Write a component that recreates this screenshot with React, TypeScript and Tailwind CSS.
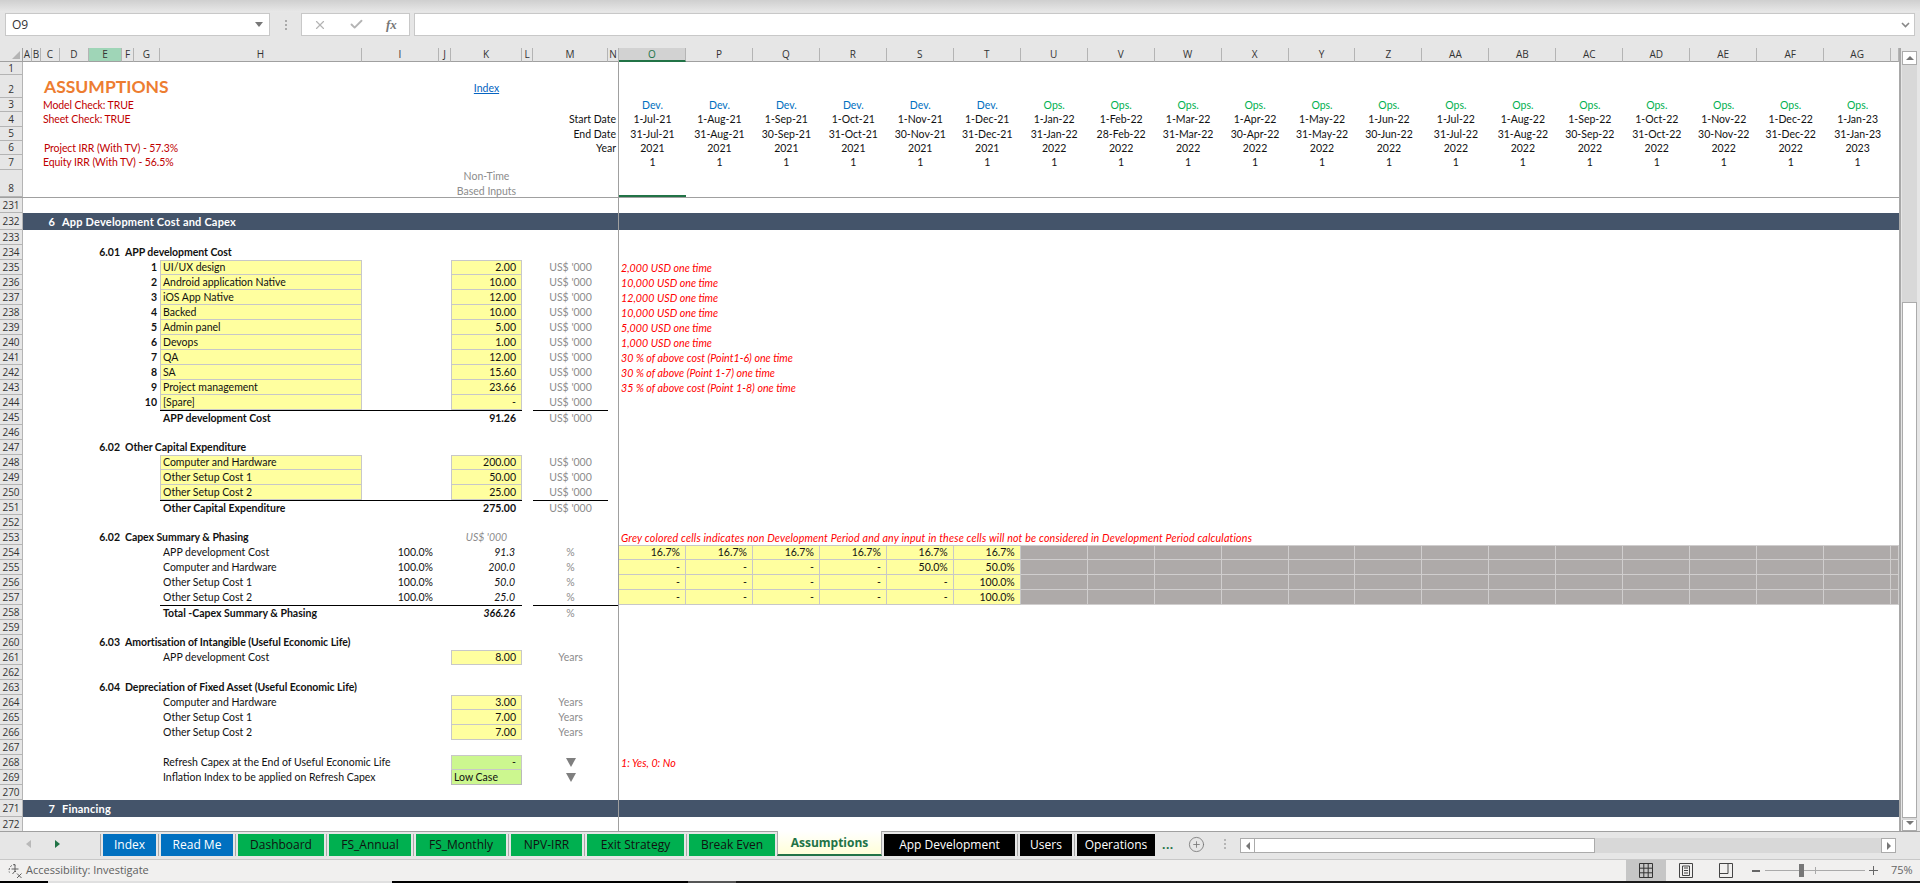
import { Check, CirclePlus, X } from 'lucide-react'
import type { ReactNode } from 'react'

const GRID =
  'grid h-full grid-rows-[minmax(0,1fr)] grid-cols-[9px_9px_19px_29px_33px_12px_26px_202px_77px_12px_71px_11px_75px_11px_repeat(19,66.96px)_minmax(0,1fr)]'

const letters = [
  'A', 'B', 'C', 'D', 'E', 'F', 'G', 'H', 'I', 'J', 'K', 'L', 'M', 'N', 'O', 'P', 'Q', 'R', 'S', 'T',
  'U', 'V', 'W', 'X', 'Y', 'Z', 'AA', 'AB', 'AC', 'AD', 'AE', 'AF', 'AG', '',
]

const phases = ['Dev.', 'Dev.', 'Dev.', 'Dev.', 'Dev.', 'Dev.', ...Array(13).fill('Ops.')] as string[]
const startDates = [
  '1-Jul-21', '1-Aug-21', '1-Sep-21', '1-Oct-21', '1-Nov-21', '1-Dec-21', '1-Jan-22', '1-Feb-22', '1-Mar-22', '1-Apr-22',
  '1-May-22', '1-Jun-22', '1-Jul-22', '1-Aug-22', '1-Sep-22', '1-Oct-22', '1-Nov-22', '1-Dec-22', '1-Jan-23',
]
const endDates = [
  '31-Jul-21', '31-Aug-21', '30-Sep-21', '31-Oct-21', '30-Nov-21', '31-Dec-21', '31-Jan-22', '28-Feb-22', '31-Mar-22', '30-Apr-22',
  '31-May-22', '30-Jun-22', '31-Jul-22', '31-Aug-22', '30-Sep-22', '31-Oct-22', '30-Nov-22', '31-Dec-22', '31-Jan-23',
]
const years = [...Array(6).fill('2021'), ...Array(12).fill('2022'), '2023'] as string[]

const devCosts = [
  { n: '1', name: 'UI/UX design', value: '2.00', note: '2,000 USD one time' },
  { n: '2', name: 'Android application Native', value: '10.00', note: '10,000 USD one time' },
  { n: '3', name: 'iOS App Native', value: '12.00', note: '12,000 USD one time' },
  { n: '4', name: 'Backed', value: '10.00', note: '10,000 USD one time' },
  { n: '5', name: 'Admin panel', value: '5.00', note: '5,000 USD one time' },
  { n: '6', name: 'Devops', value: '1.00', note: '1,000 USD one time' },
  { n: '7', name: 'QA', value: '12.00', note: '30 % of above cost (Point1-6) one time' },
  { n: '8', name: 'SA', value: '15.60', note: '30 % of above (Point 1-7) one time' },
  { n: '9', name: 'Project management', value: '23.66', note: '35 % of above cost (Point 1-8) one time' },
  { n: '10', name: '[Spare]', value: '-', note: '' },
]

const otherCapex = [
  { name: 'Computer and Hardware', value: '200.00' },
  { name: 'Other Setup Cost 1', value: '50.00' },
  { name: 'Other Setup Cost 2', value: '25.00' },
]

const capexSummary = [
  { name: 'APP development Cost', amount: '91.3', split: ['16.7%', '16.7%', '16.7%', '16.7%', '16.7%', '16.7%'] },
  { name: 'Computer and Hardware', amount: '200.0', split: ['-', '-', '-', '-', '50.0%', '50.0%'] },
  { name: 'Other Setup Cost 1', amount: '50.0', split: ['-', '-', '-', '-', '-', '100.0%'] },
  { name: 'Other Setup Cost 2', amount: '25.0', split: ['-', '-', '-', '-', '-', '100.0%'] },
]

const usefulLife = [
  { name: 'Computer and Hardware', value: '3.00' },
  { name: 'Other Setup Cost 1', value: '7.00' },
  { name: 'Other Setup Cost 2', value: '7.00' },
]

const tabs = [
  { name: 'Index', w: 'w-[53px]', tone: 'bg-[#0070c0] text-white' },
  { name: 'Read Me', w: 'w-[72px]', tone: 'bg-[#0070c0] text-white' },
  { name: 'Dashboard', w: 'w-[86px]', tone: 'bg-[#00b050] text-[#111]' },
  { name: 'FS_Annual', w: 'w-[82px]', tone: 'bg-[#00b050] text-[#111]' },
  { name: 'FS_Monthly', w: 'w-[90px]', tone: 'bg-[#00b050] text-[#111]' },
  { name: 'NPV-IRR', w: 'w-[71px]', tone: 'bg-[#00b050] text-[#111]' },
  { name: 'Exit Strategy', w: 'w-[97px]', tone: 'bg-[#00b050] text-[#111]' },
  { name: 'Break Even', w: 'w-[86px]', tone: 'bg-[#00b050] text-[#111]' },
]
const blackTabs = [
  { name: 'App Development', w: 'w-[131px]' },
  { name: 'Users', w: 'w-[52px]' },
  { name: 'Operations', w: 'w-[78px]' },
]

function Row({ n, h = 'h-[15px]', band, children }: { n: number; h?: string; band?: boolean; children?: ReactNode }) {
  return (
    <div className={`flex ${h} ${band ? 'bg-[#44546a] font-bold text-white' : 'bg-white'}`}>
      <div className="flex w-[23px] flex-none items-center justify-center border-r border-b border-[#b4b4b4] bg-[#e6e6e6] font-['Open_Sans',sans-serif] text-[10px] font-normal text-[#333]">
        {n}
      </div>
      <div className="min-w-0 flex-1">
        <div className={GRID}>{children}</div>
      </div>
    </div>
  )
}

function HeadRow({ n, h, low, children }: { n: number; h: string; low?: boolean; children?: ReactNode }) {
  return (
    <div className={`flex ${h} bg-white`}>
      <div
        className={`flex w-[23px] flex-none justify-center border-r border-b border-[#b4b4b4] bg-[#e6e6e6] font-['Open_Sans',sans-serif] text-[10px] text-[#333] ${
          low ? 'items-end pb-px' : 'items-center'
        }`}
      >
        {n}
      </div>
      <div className="min-w-0 flex-1">
        <div className={GRID}>{children}</div>
      </div>
    </div>
  )
}

function Title({ num, children }: { num: string; children: ReactNode }) {
  return (
    <>
      <div className="col-[5/6] flex items-center justify-end pr-[2px] font-bold">{num}</div>
      <div className="col-[6/11] flex items-center pl-[3px] font-bold tracking-[-0.05px] whitespace-nowrap">{children}</div>
    </>
  )
}

function Label({ children, bold, line }: { children: ReactNode; bold?: boolean; line?: boolean }) {
  return (
    <div className={`col-start-8 flex items-center pl-[3px] whitespace-nowrap ${bold ? 'font-bold' : ''} ${line ? 'border-t border-black' : ''}`}>
      {children}
    </div>
  )
}

function Input({ children, top, tone = 'bg-[#ffff9f]' }: { children?: ReactNode; top?: boolean; tone?: string }) {
  return (
    <div className={`col-start-11 flex items-center justify-end border-x border-b border-[#c8c8c8] pr-[5px] ${tone} ${top ? 'border-t' : ''}`}>
      {children}
    </div>
  )
}

function Unit({ children }: { children: ReactNode }) {
  return <div className="col-start-13 flex items-center justify-center text-[#8c8c8c]">{children}</div>
}

function Note({ children, wide }: { children: ReactNode; wide?: boolean }) {
  return (
    <div className={`col-[15/-1] flex items-center pl-[2px] text-[10.7px] whitespace-nowrap text-[#ff0000] italic ${wide ? 'tracking-[0.16px]' : ''}`}>
      {children}
    </div>
  )
}

function FormulaBar() {
  return (
    <div className="flex h-[48px] flex-none flex-col font-['Open_Sans',sans-serif]">
      <div className="h-[12px] bg-gradient-to-b from-[#cfcfcf] to-[#e8e8e8]" />
      <div className="flex h-[25px] items-stretch border-y border-transparent pl-[5px]">
        <div className="flex w-[265px] items-center justify-between border border-[#c8c8c8] bg-white pr-[6px] pl-[6px] text-[12px] text-[#333]">
          O9
          <span className="h-0 w-0 border-x-[4px] border-t-[5px] border-x-transparent border-t-[#777]" />
        </div>
        <div className="flex w-[31px] flex-col items-center justify-center gap-[2px]">
          <span className="h-[2px] w-[2px] bg-[#aaa]" />
          <span className="h-[2px] w-[2px] bg-[#aaa]" />
          <span className="h-[2px] w-[2px] bg-[#aaa]" />
        </div>
        <div className="flex w-[109px] items-center gap-[22px] border border-[#c8c8c8] bg-white pl-[11px]">
          <X size={14} strokeWidth={2} className="text-[#b4b4b4]" />
          <Check size={15} strokeWidth={3} className="text-[#b4b4b4]" />
          <span className="font-['Liberation_Serif',serif] text-[13px] font-bold text-[#777] italic">fx</span>
        </div>
        <div className="ml-[4px] flex w-[1501px] items-center justify-end border border-[#c8c8c8] bg-white pr-[4px]">
          <svg width="9" height="6" viewBox="0 0 9 6" fill="none" stroke="#888" strokeWidth="1.6">
            <path d="M1 1l3.5 3.5L8 1" />
          </svg>
        </div>
      </div>
    </div>
  )
}

function ColumnHeads() {
  return (
    <div className="flex h-[14px] flex-none font-['Open_Sans',sans-serif] text-[10px] text-[#333]">
      <div className="flex w-[23px] flex-none items-end justify-end border-r border-b border-[#a0a0a0] pr-[2px] pb-[2px]">
        <svg width="8" height="8" viewBox="0 0 8 8">
          <path d="M8 0v8H0z" fill="#b4b4b4" />
        </svg>
      </div>
      <div className="min-w-0 flex-1">
        <div className={GRID}>
          {letters.map((l, i) => (
            <div
              key={i}
              className={`flex items-center justify-center border-r border-[#b4b4b4] ${
                l === 'O'
                  ? 'border-b-2 border-b-[#217346] bg-[#d2d2d2] text-[#217346]'
                  : l === 'E'
                    ? 'border-b border-b-[#a0a0a0] bg-[#9fd5b7]'
                    : 'border-b border-b-[#a0a0a0]'
              }`}
            >
              {l}
            </div>
          ))}
        </div>
      </div>
    </div>
  )
}

function Frozen() {
  return (
    <div className="flex-none border-b border-[#a0a0a0]">
      <HeadRow n={1} h="h-[13px]" />
      <HeadRow n={2} h="h-[23px]" low>
        <div className="col-[3/9] flex items-end pl-[3px] text-[17.5px] leading-[21px] pb-[1px] font-bold whitespace-nowrap text-[#ed7d31]">ASSUMPTIONS</div>
        <div className="col-start-11 flex items-end justify-center pb-[3px] text-[#0563c1] underline">Index</div>
      </HeadRow>
      <HeadRow n={3} h="h-[14px]">
        <div className="col-[3/9] flex items-center pl-[2px] tracking-[-0.1px] whitespace-nowrap text-[#c00000]">Model Check: TRUE</div>
        {phases.map((p, i) => (
          <div
            key={i}
            className={`flex items-center justify-center ${i === 0 ? 'col-start-15' : ''} ${p === 'Dev.' ? 'text-[#0070c0]' : 'text-[#00b050]'}`}
          >
            {p}
          </div>
        ))}
      </HeadRow>
      <HeadRow n={4} h="h-[15px]">
        <div className="col-[3/9] flex items-center pl-[2px] tracking-[-0.1px] whitespace-nowrap text-[#c00000]">Sheet Check: TRUE</div>
        <div className="col-[13/15] flex items-center justify-end pr-[3px]">Start Date</div>
        {startDates.map((d) => (
          <div key={d} className="flex items-center justify-center">
            {d}
          </div>
        ))}
      </HeadRow>
      <HeadRow n={5} h="h-[14px]">
        <div className="col-[13/15] flex items-center justify-end pr-[3px]">End Date</div>
        {endDates.map((d) => (
          <div key={d} className="flex items-center justify-center">
            {d}
          </div>
        ))}
      </HeadRow>
      <HeadRow n={6} h="h-[14px]">
        <div className="col-[3/9] flex items-center pl-[3px] tracking-[-0.1px] whitespace-nowrap text-[#c00000]">Project IRR (With TV) - 57.3%</div>
        <div className="col-[13/15] flex items-center justify-end pr-[3px]">Year</div>
        {years.map((y, i) => (
          <div key={i} className="flex items-center justify-center">
            {y}
          </div>
        ))}
      </HeadRow>
      <HeadRow n={7} h="h-[15px]">
        <div className="col-[3/9] flex items-center pl-[2px] tracking-[-0.1px] whitespace-nowrap text-[#c00000]">Equity IRR (With TV) - 56.5%</div>
        {years.map((_, i) => (
          <div key={i} className={`flex items-center justify-center ${i === 0 ? 'col-start-15' : ''}`}>
            1
          </div>
        ))}
      </HeadRow>
      <HeadRow n={8} h="h-[27px]" low>
        <div className="col-start-11 -mb-[2px] flex items-end justify-center text-center leading-[15px] text-[#8c8c8c]">
          Non-Time
          <br />
          Based Inputs
        </div>
        <div className="col-start-15 border-b-2 border-[#217346]" />
      </HeadRow>
    </div>
  )
}

function Sheet() {
  return (
    <div className="relative min-w-0 flex-1 overflow-hidden border-r-2 border-[#a8a8a8] font-['Lato',sans-serif] text-[10.5px] leading-[13px] text-[#111]">
      <ColumnHeads />
      <Frozen />
      <Row n={231} />
      <Row n={232} h="h-[17px]" band>
        <div className="col-start-3 flex items-center justify-end pr-[5px] text-[11px]">6</div>
        <div className="col-[4/12] flex items-center pl-[2px] text-[11px] tracking-[0.2px] whitespace-nowrap">App Development Cost and Capex</div>
      </Row>
      <Row n={233} />
      <Row n={234}>
        <Title num="6.01">APP development Cost</Title>
      </Row>
      {devCosts.map((c, i) => (
        <Row key={c.n} n={235 + i}>
          <div className="col-start-7 flex items-center justify-end pr-[3px] font-bold">{c.n}</div>
          <div className={`col-start-8 flex items-center border-x border-b border-[#c8c8c8] bg-[#ffff9f] pl-[2px] ${i === 0 ? 'border-t' : ''}`}>
            {c.name}
          </div>
          <Input top={i === 0}>{c.value}</Input>
          <Unit>US$ '000</Unit>
          {c.note && <Note>{c.note}</Note>}
        </Row>
      ))}
      <Row n={245}>
        <Label bold line>
          APP development Cost
        </Label>
        <div className="col-[9/11] border-t border-black" />
        <div className="col-start-11 flex items-center justify-end border-t border-black pr-[6px] font-bold">91.26</div>
        <div className="col-start-13 flex items-center justify-center border-t border-black text-[#8c8c8c]">US$ '000</div>
      </Row>
      <Row n={246} />
      <Row n={247}>
        <Title num="6.02">Other Capital Expenditure</Title>
      </Row>
      {otherCapex.map((c, i) => (
        <Row key={c.name} n={248 + i}>
          <div className={`col-start-8 flex items-center border-x border-b border-[#c8c8c8] bg-[#ffff9f] pl-[2px] ${i === 0 ? 'border-t' : ''}`}>
            {c.name}
          </div>
          <Input top={i === 0}>{c.value}</Input>
          <Unit>US$ '000</Unit>
        </Row>
      ))}
      <Row n={251}>
        <Label bold line>
          Other Capital Expenditure
        </Label>
        <div className="col-[9/11] border-t border-black" />
        <div className="col-start-11 flex items-center justify-end border-t border-black pr-[6px] font-bold">275.00</div>
        <div className="col-start-13 flex items-center justify-center border-t border-black text-[#8c8c8c]">US$ '000</div>
      </Row>
      <Row n={252} />
      <Row n={253}>
        <Title num="6.02">Capex Summary &amp; Phasing</Title>
        <div className="col-start-11 flex items-center justify-center text-[#8c8c8c] italic">US$ '000</div>
        <Note wide>Grey colored cells indicates non Development Period and any input in these cells will not be considered in Development Period calculations</Note>
      </Row>
      {capexSummary.map((c, i) => (
        <Row key={c.name} n={254 + i}>
          <Label>{c.name}</Label>
          <div className="flex items-center justify-end pr-[6px]">100.0%</div>
          <div className="col-start-11 flex items-center justify-end pr-[7px] italic">{c.amount}</div>
          <Unit>%</Unit>
          {c.split.map((s, j) => (
            <div
              key={j}
              className={`flex items-center justify-end border-r border-b border-[#c8c8c8] bg-[#ffff9f] pr-[5px] ${j === 0 ? 'col-start-15' : ''} ${i === 0 ? 'border-t' : ''}`}
            >
              {s}
            </div>
          ))}
          {Array.from({ length: 14 }).map((_, j) => (
            <div key={j} className={`border-r border-b border-[#d0cece] bg-[#aeaaa9] ${i === 0 ? 'border-t' : ''}`} />
          ))}
        </Row>
      ))}
      <Row n={258}>
        <Label bold line>
          Total -Capex Summary &amp; Phasing
        </Label>
        <div className="col-[9/11] border-t border-black" />
        <div className="col-start-11 flex items-center justify-end border-t border-black pr-[7px] font-bold italic">366.26</div>
        <div className="col-[13/15] flex items-center justify-center border-t border-black pr-[11px] text-[#8c8c8c]">%</div>
      </Row>
      <Row n={259} />
      <Row n={260}>
        <Title num="6.03">Amortisation of Intangible (Useful Economic Life)</Title>
      </Row>
      <Row n={261}>
        <Label>APP development Cost</Label>
        <Input top>8.00</Input>
        <Unit>Years</Unit>
      </Row>
      <Row n={262} />
      <Row n={263}>
        <Title num="6.04">Depreciation of Fixed Asset (Useful Economic Life)</Title>
      </Row>
      {usefulLife.map((c, i) => (
        <Row key={c.name} n={264 + i}>
          <Label>{c.name}</Label>
          <Input top={i === 0}>{c.value}</Input>
          <Unit>Years</Unit>
        </Row>
      ))}
      <Row n={267} />
      <Row n={268}>
        <Label>Refresh Capex at the End of Useful Economic Life</Label>
        <Input top tone="bg-[#ccf78f]">
          -
        </Input>
        <div className="col-start-13 flex items-center justify-center">
          <span className="h-0 w-0 border-x-[5px] border-t-[9px] border-x-transparent border-t-[#7f7f7f]" />
        </div>
        <Note>1: Yes, 0: No</Note>
      </Row>
      <Row n={269}>
        <Label>Inflation Index to be applied on Refresh Capex</Label>
        <div className="col-start-11 flex items-center border-x border-b border-[#b9b9b9] bg-[#ccf78f] pl-[2px]">Low Case</div>
        <div className="col-start-13 flex items-center justify-center">
          <span className="h-0 w-0 border-x-[5px] border-t-[9px] border-x-transparent border-t-[#7f7f7f]" />
        </div>
      </Row>
      <Row n={270} />
      <Row n={271} h="h-[17px]" band>
        <div className="col-start-3 flex items-center justify-end pr-[5px] text-[11px]">7</div>
        <div className="col-[4/12] flex items-center pl-[2px] text-[11px] tracking-[0.2px] whitespace-nowrap">Financing</div>
      </Row>
      <Row n={272} />
      <div className="pointer-events-none absolute top-[14px] bottom-0 left-[618px] w-px bg-[#a0a0a0]" />
    </div>
  )
}

function VerticalScroll() {
  return (
    <div className="flex w-[19px] flex-none flex-col bg-[#e6e6e6] pt-[3px] pr-[3px] pl-px">
      <div className="flex h-[14px] flex-none items-center justify-center border border-[#ababab] bg-white">
        <span className="h-0 w-0 border-x-[4px] border-b-[4px] border-x-transparent border-b-[#777]" />
      </div>
      <div className="h-[237px] flex-none bg-[#d8d8d8]" />
      <div className="min-h-0 flex-1 border border-[#ababab] bg-white" />
      <div className="h-[2px] flex-none bg-[#d8d8d8]" />
      <div className="flex h-[11px] flex-none items-start justify-center border-x border-b border-[#ababab] bg-white pt-[1px]">
        <span className="h-0 w-0 border-x-[4px] border-t-[4px] border-x-transparent border-t-[#777]" />
      </div>
    </div>
  )
}

function TabBar() {
  const divider = <span className="mx-[2px] h-[22px] w-px flex-none bg-[#a8a8a8]" />
  return (
    <div className="flex h-[28px] flex-none items-start border-t border-[#a0a0a0] bg-[#e6e6e6] font-['Open_Sans',sans-serif] text-[12px]">
      <div className="flex h-full w-[98px] flex-none items-center pb-[3px]">
        <span className="ml-[26px] h-0 w-0 border-y-[4px] border-r-[5px] border-y-transparent border-r-[#b9b9b9]" />
        <span className="ml-[24px] h-0 w-0 border-y-[4px] border-l-[5px] border-y-transparent border-l-[#217346]" />
      </div>
      <div className="flex items-start pt-[2px]">
        {tabs.map((t) => (
          <div key={t.name} className="flex items-center">
            {divider}
            <div className={`flex h-[22px] items-center justify-center whitespace-nowrap ${t.w} ${t.tone}`}>{t.name}</div>
          </div>
        ))}
        <div className="-mt-[3px] ml-[2px] flex h-[25px] w-[105px] flex-none items-center justify-center border-x border-[#a8a8a8] border-b-2 border-b-[#217346] bg-gradient-to-b from-white to-[#ffffd8] font-bold text-[#217346]">
          Assumptions
        </div>
        {blackTabs.map((t, i) => (
          <div key={t.name} className="flex items-center">
            {i === 0 ? <span className="w-[2px] flex-none" /> : divider}
            <div className={`flex h-[22px] items-center justify-center whitespace-nowrap bg-black text-white ${t.w}`}>{t.name}</div>
          </div>
        ))}
      </div>
      <div className="ml-[7px] flex h-full w-[13px] flex-none items-center pb-[2px] font-bold tracking-[0.5px] text-[#217346]">...</div>
      <div className="ml-[13px] flex h-full flex-none items-center pb-[3px]">
        <CirclePlus size={17} strokeWidth={1.2} className="text-[#777]" />
      </div>
      <div className="ml-[19px] flex h-full flex-none flex-col items-center justify-center gap-[2px] pb-[3px]">
        <span className="h-[2px] w-[2px] bg-[#b5b5b5]" />
        <span className="h-[2px] w-[2px] bg-[#b5b5b5]" />
        <span className="h-[2px] w-[2px] bg-[#b5b5b5]" />
      </div>
      <div className="mt-[6px] ml-[14px] flex h-[15px] flex-1 items-stretch pr-[24px]">
        <div className="flex w-[15px] flex-none items-center justify-center border border-[#ababab] bg-white">
          <span className="h-0 w-0 border-y-[4px] border-r-[4px] border-y-transparent border-r-[#777]" />
        </div>
        <div className="w-[340px] flex-none border border-l-0 border-[#ababab] bg-white" />
        <div className="flex-1 bg-[#d8d8d8]" />
        <div className="flex w-[15px] flex-none items-center justify-center border border-[#ababab] bg-white">
          <span className="h-0 w-0 border-y-[4px] border-l-[4px] border-y-transparent border-l-[#777]" />
        </div>
      </div>
    </div>
  )
}

function StatusBar() {
  return (
    <div className="flex h-[22px] flex-none items-stretch border-t border-[#c8c8c8] bg-[#f1f0ef] font-['Open_Sans',sans-serif] text-[11px] text-[#606060]">
      <div className="flex items-center gap-[3px] pl-[7px]">
        <svg width="16" height="16" viewBox="0 0 16 16" fill="none" stroke="#606060" strokeWidth="1">
          <path d="M8 1.5a6 6 0 0 0-5.6 8" strokeDasharray="2 1.4" />
          <path d="M8 3v5M4.5 6h7M8 8L5.5 11M8 8l1 1" />
          <path d="M10 10.5l4.5 4.5M14.5 10.5L10 15" />
          <circle cx="8" cy="2.2" r="0.8" fill="#606060" stroke="none" />
        </svg>
        Accessibility: Investigate
      </div>
      <div className="ml-auto flex items-stretch">
        <div className="flex w-[40px] items-center justify-center bg-[#c6c6c6]">
          <svg width="14" height="15" viewBox="0 0 14 15" fill="none" stroke="#333" strokeWidth="1">
            <path d="M.5.5h13v14H.5zM.5 5.2h13M.5 9.8h13M4.8.5v14M9.2.5v14" />
          </svg>
        </div>
        <div className="flex w-[40px] items-center justify-center">
          <svg width="14" height="15" viewBox="0 0 14 15" fill="none" stroke="#444" strokeWidth="1">
            <path d="M.5.5h13v14H.5z" />
            <path d="M3.5 3v9.5h7V3zM5 5h4M5 7.5h4M5 10h4" />
          </svg>
        </div>
        <div className="flex w-[40px] items-center justify-center">
          <svg width="14" height="15" viewBox="0 0 14 15" fill="none" stroke="#444" strokeWidth="1">
            <path d="M.5.5h13v14H.5zM.5 10.5h8.5V.5" />
          </svg>
        </div>
        <div className="flex w-[19px] items-center justify-center">
          <span className="h-[2px] w-[8px] bg-[#666]" />
        </div>
        <div className="relative flex w-[100px] items-center">
          <span className="h-px w-full bg-[#aaa]" />
          <span className="absolute left-[50px] h-[7px] w-px bg-[#aaa]" />
          <span className="absolute left-[34px] h-[13px] w-[5px] bg-[#777]" />
        </div>
        <div className="flex w-[17px] items-center justify-center">
          <span className="relative h-[9px] w-[9px]">
            <span className="absolute top-[4px] left-0 h-px w-[9px] bg-[#666]" />
            <span className="absolute top-0 left-[4px] h-[9px] w-px bg-[#666]" />
          </span>
        </div>
        <div className="flex w-[38px] items-center pl-[9px] text-[#666]">75%</div>
      </div>
    </div>
  )
}

export default function App() {
  return (
    <div className="flex h-[883px] w-[1920px] flex-col overflow-hidden bg-[#e6e6e6]">
      <FormulaBar />
      <div className="flex min-h-0 flex-1">
        <Sheet />
        <VerticalScroll />
      </div>
      <TabBar />
      <StatusBar />
      <div className="flex h-[2px] flex-none">
        <div className="w-[48px] bg-black" />
        <div className="w-[344px] bg-[#e0e0e0]" />
        <div className="w-[296px] bg-black" />
        <div className="w-[48px] bg-[#555]" />
        <div className="flex-1 bg-[#1a1a1a]" />
      </div>
    </div>
  )
}
